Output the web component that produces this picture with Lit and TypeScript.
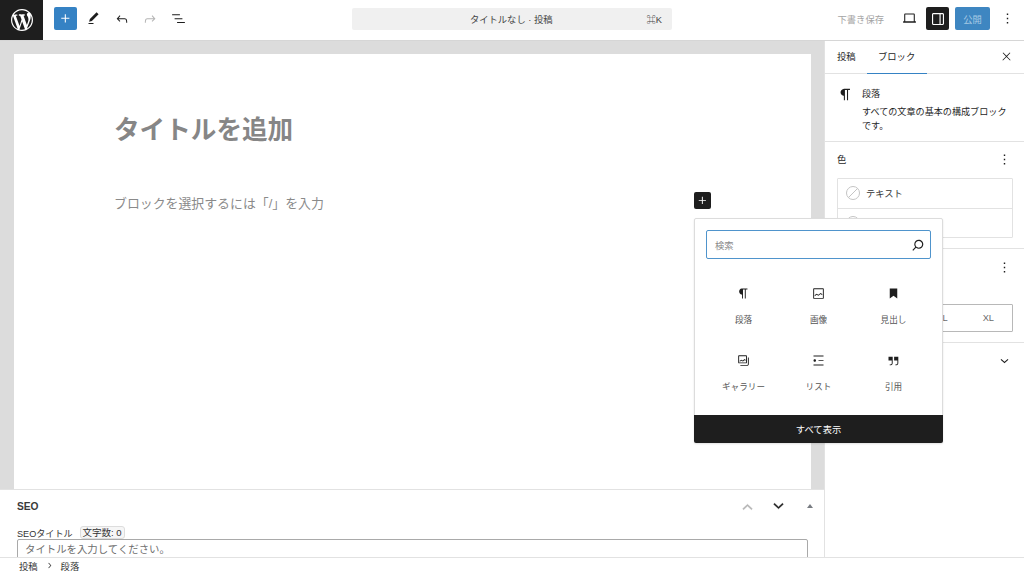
import { LitElement, html, css, svg } from "lit";
import { customElement } from "lit/decorators.js";

const P = {
  plus: "M11 12.5V17.5H12.5V12.5H17.5V11H12.5V6H11V11H6V12.5H11Z",
  undo: "M18.3 11.7c-.6-.6-1.4-.9-2.3-.9H6.7l2.9-3.3-1.1-1-4.5 5L8.5 16l1-1-2.7-2.7H16c.5 0 .9.2 1.3.5 1 1 1 3.4 1 4.5v.3h1.5v-.2c0-1.5 0-4.3-1.5-5.7z",
  redo: "M15.6 6.5l-1.1 1 2.9 3.3H8c-.9 0-1.7.3-2.3.9-1.4 1.5-1.4 4.2-1.4 5.6v.2h1.5v-.3c0-1.1 0-3.5 1-4.5.3-.3.7-.5 1.3-.5h9.2L14.5 15l1.1 1.1 4.6-4.6-4.6-5z",
  list: "M3 6h11v1.5H3V6Zm3.5 5.5h11V13h-11v-1.5ZM21 17H10v1.5h11V17Z",
  pencil: "M20.1 5.1 16.9 2 6.2 12.7l-1.3 4.4 4.5-1.3L20.1 5.1zM4 20.8h8v-1.5H4v1.5z",
  para: "M18.3 4H9.9v-.1l-.9.2c-2.3.4-4 2.4-4 4.8s1.7 4.4 4 4.8l.7.1V20h1.5V5.5h2.9V20h1.5V5.5h2.7V4z",
  heading: "M6 4h12v16l-6-4.5L6 20z",
  image: "M5 3.500h14c.8 0 1.500.7 1.500 1.500v14c0 .8-.7 1.500-1.500 1.500H5c-.8 0-1.500-.7-1.500-1.500V5c0-.8.7-1.500 1.500-1.500zM5 5v14h14V5H5zm.6 9.800 3.200-2.600 3 1.800 3.600-3 3 2.200-.9 1.100-2.100-1.500-3.500 2.900-3-1.800-2.400 2z",
  gallery: "M5 3.5h11c.8 0 1.5.7 1.5 1.5v10c0 .8-.7 1.5-1.5 1.5H5c-.8 0-1.5-.7-1.5-1.5V5c0-.8.7-1.500 1.5-1.500zM5 5v10h11V5H5zm.5 7.6 3-2 2.4 1.2 2.8-2.1 2 1.4-.9 1.2-1.1-.8-2.6 2-2.5-1.2-2.1 1.4zM19 7h1.5v11c0 1.4-1.1 2.5-2.5 2.5H7V19h11c.6 0 1-.4 1-1V7z",
  listBlock: "M4 4v1.5h16V4H4zm8 8.5h8V11h-8v1.5zM4 20h16v-1.5H4V20zm4-8c0-1.1-.9-2-2-2s-2 .9-2 2 .9 2 2 2 2-.9 2-2z",
  quote: "M13 6v6h5.2v4c0 .8-.2 1.4-.5 1.7-.6.6-1.6.6-2.5.5h-.3v1.5h.5c1 0 2.3-.1 3.3-1 .6-.6 1-1.6 1-2.8V6H13zm-9 6h5.2v4c0 .8-.2 1.4-.5 1.7-.6.6-1.6.6-2.5.5h-.3v1.5h.5c1 0 2.3-.1 3.3-1 .6-.6 1-1.6 1-2.8V6H4v6z",
  search: "M13 5c-3.3 0-6 2.7-6 6 0 1.4.5 2.7 1.3 3.7l-3.8 3.8 1.1 1.1 3.8-3.8c1 .8 2.3 1.3 3.7 1.3 3.3 0 6-2.7 6-6S16.3 5 13 5zm0 10.5c-2.5 0-4.5-2-4.5-4.5s2-4.5 4.5-4.5 4.5 2 4.5 4.5-2 4.5-4.5 4.5z",
  close: "M13 11.8l6.1-6.3-1-1-6.1 6.2-6.1-6.2-1 1 6.1 6.3-6.5 6.7 1 1 6.5-6.6 6.5 6.6 1-1z",
  more: "M13 19h-2v-2h2v2zm0-6h-2v-2h2v2zm0-6h-2V5h2v2z",
  laptop: "M6 5h12c.8 0 1.5.7 1.5 1.5V16H21v2H3v-2h1.5V6.500C4.500 5.700 5.200 5 6 5zm0 1.500V16h12V6.500H6z",
  sidebar: "M18 4H6c-1.100 0-2 .9-2 2v12c0 1.100.9 2 2 2h12c1.100 0 2-.9 2-2V6c0-1.100-.9-2-2-2zM5.500 18V6c0-.3.2-.5.5-.5h8v13H6c-.3 0-.5-.2-.5-.5zm13 0c0 .3-.2.5-.5.5h-2.500v-13H18c.3 0 .5.2.5.5v12z",
  chevDown: "M17.500 9.500 12 14.500l-5.500-5 1-1.100L12 12.500l4.500-4.100z",
  chevUp: "M6.500 14.500 12 9.500l5.500 5-1 1.100L12 11.500l-4.500 4.100z",
  chevRight: "M10.600 6 9.400 7l4.600 5-4.600 5 1.200 1 5.400-6z",
  wp: "M20 10c0-5.51-4.49-10-10-10C4.480 0 0 4.490 0 10c0 5.520 4.480 10 10 10 5.510 0 10-4.480 10-10zM7.780 15.370 4.370 6.220c.55-.02 1.170-.08 1.170-.08.5-.06.44-1.130-.06-1.110 0 0-1.450.11-2.370.11-.18 0-.37 0-.58-.01C4.120 2.690 6.870 1.110 10 1.110c2.330 0 4.450.87 6.050 2.340-.68-.11-1.650.39-1.650 1.580 0 .74.45 1.360.9 2.100.35.61.55 1.360.55 2.460 0 1.490-1.400 5-1.400 5l-3.030-8.370c.54-.02.82-.17.82-.17.5-.05.44-1.250-.06-1.220 0 0-1.440.12-2.380.12-.87 0-2.330-.12-2.330-.12-.5-.03-.56 1.200-.06 1.220l.92.08 1.260 3.410zM17.410 10c.24-.64.74-1.870.43-4.250.7 1.290 1.050 2.710 1.050 4.250 0 3.290-1.730 6.240-4.400 7.780.97-2.590 1.940-5.200 2.920-7.780zM6.100 18.090C3.120 16.650 1.110 13.530 1.110 10c0-1.300.23-2.480.72-3.590C3.250 10.300 4.670 14.200 6.100 18.090zm4.030-6.630 2.580 6.980c-.86.29-1.760.45-2.710.45-.79 0-1.570-.11-2.290-.33.81-2.380 1.620-4.740 2.420-7.100z",
};

const icon = (d: string, size = 17, vb = 24) =>
  html`<svg width=${size} height=${size} viewBox="0 0 ${vb} ${vb}" fill="currentColor">${svg`<path d=${d}></path>`}</svg>`;

const blocks: [string, string][] = [
  [P.para, "段落"],
  [P.image, "画像"],
  [P.heading, "見出し"],
  [P.gallery, "ギャラリー"],
  [P.listBlock, "リスト"],
  [P.quote, "引用"],
];

@customElement("app-root")
export class AppRoot extends LitElement {
  static styles = css`
    :host {
      display: flex;
      flex-direction: column;
      position: relative;
      width: 1024px;
      height: 575px;
      overflow: hidden;
      background: #fff;
      color: #1e1e1e;
      font-family: "Liberation Sans", "Noto Sans CJK JP", sans-serif;
      font-size: 9.3px;
    }
    svg { display: block; flex: none; }
    .top {
      flex: none;
      height: 37px;
      padding-bottom: 3px;
      display: flex;
      align-items: center;
      border-bottom: 1px solid #d6d6d6;
      box-sizing: content-box;
    }
    .logo {
      width: 43px;
      height: 40px;
      align-self: flex-start;
      background: #1e1e1e;
      color: #fff;
      display: flex;
      align-items: center;
      justify-content: center;
    }
    .tools { display: flex; align-items: center; width: 309px; padding-left: 11px; box-sizing: border-box; }
    .ib { width: 28.500px; display: flex; justify-content: center; }
    .add {
      width: 23px; height: 23px; border-radius: 2px; background: #3582c4; color: #fff;
      display: flex; align-items: center; justify-content: center; margin-right: 2px;
    }
    .muted { color: #b4b4b4; }
    .cmd {
      width: 320px; height: 22px; background: #f0f0f0; border-radius: 2px;
      display: grid; grid-template-columns: 1fr auto; align-items: center;
      padding: 0 10px; box-sizing: border-box; position: relative; color: #444; font-size: 9.300px;
    }
    .cmd .t { text-align: center; padding-left: 14px; }
    .cmd .k { font-size: 9.300px; }
    .right { display: flex; align-items: center; margin-left: auto; padding-right: 8px; }
    .save { color: #a4a4a4; margin-right: 14px; }
    .view { width: 23px; display: flex; justify-content: center; margin-right: 5px; }
    .toggle {
      width: 23px; height: 23px; border-radius: 2px; background: #1e1e1e; color: #fff;
      display: flex; align-items: center; justify-content: center; margin-right: 6px;
    }
    .pub {
      width: 35px; height: 23px; border-radius: 2px; background: #3e86c1; color: #a9cbe5;
      display: flex; align-items: center; justify-content: center; margin-right: 9px;
    }
    .body { flex: 1; min-height: 0; display: flex; }
    .main { flex: 1; min-width: 0; display: flex; flex-direction: column; }
    .canvas {
      flex: 1; min-height: 0; background: #dcdcdc; padding: 13px 13px 0 14px;
      display: flex;
    }
    .sheet { flex: 1; background: #fff; padding: 57px 100px 0; }
    .title { font-size: 25.600px; font-weight: 700; color: #868686; line-height: 38px; margin: 0; }
    .ph { font-size: 12.900px; color: #8a8a8a; line-height: 20px; margin-top: 45px; }
    .seo {
      flex: none; height: 68px; border-top: 1px solid #e2e2e2; box-sizing: border-box;
      padding: 0 16px 0 17px; overflow: hidden;
    }
    .seo-h { height: 32px; display: flex; align-items: center; color: #3a3a3a; }
    .seo-h b { font-size: 10.200px; font-weight: 700; }
    .seo-h .ctr { margin-left: auto; margin-right: -5px; display: flex; align-items: center; gap: 10px; }
    .seo-h .ctr svg { stroke: currentColor; stroke-width: .5px; }
    .seo-h .dn { color: #1e1e1e; }
    .tri { width: 0; height: 0; border: 3px solid transparent; border-top: 0; border-bottom: 4px solid #787c82; margin-left: 8px; }
    .seo-l { display: flex; align-items: center; height: 15px; margin-top: 3px; gap: 7px; font-size: 9.100px; color: #333; }
    .badge { border: 1px solid #ddd; border-radius: 3px; padding: 0 2px; background: #f6f6f6; line-height: 11px; font-size: 9.500px; }
    .seo-i {
      height: 30px; margin-top: -1px; box-sizing: border-box; border: 1px solid #a9a9a9; border-radius: 2px;
      padding: 1px 7px; font-size: 10.400px; color: #6e6e6e;
    }
    .side { flex: none; width: 199px; border-left: 1px solid #e2e2e2; box-sizing: content-box; }
    .tabs {
      height: 32px; display: flex; align-items: stretch; border-bottom: 1px solid #e2e2e2;
      padding: 0 11px 0 0; color: #1e1e1e;
    }
    .tab { display: flex; align-items: center; justify-content: center; padding: 0 11px 2px 12px; }
    .tab.on { width: 60px; padding: 0 0 2px; box-sizing: border-box; border-bottom: 1px solid #3582c4; margin-bottom: -1px; }
    .tabs .x { margin-left: auto; display: flex; align-items: center; padding-bottom: 2px; }
    .card { height: 68px; box-sizing: border-box; border-bottom: 1px solid #e2e2e2; padding: 12px 11px 0 12px; display: flex; gap: 8px; }
    .card .txt { line-height: 14.500px; padding-top: 1px; font-size: 9.100px; }
    .card .nm { margin-bottom: 3px; }
    .panel { border-bottom: 1px solid #e2e2e2; padding: 0 11px 0 12px; box-sizing: border-box; }
    .ph-row { display: flex; align-items: center; justify-content: space-between; }
    .p-color { height: 107px; padding-top: 9px; }
    .p-color .ph-row span { position: relative; top: -1px; }
    .p-type { height: 94px; padding-top: 10px; }
    .p-adv { border: 0; padding-top: 10px; }
    .colors { border: 1px solid #e2e2e2; border-radius: 1px; margin-top: 10px; }
    .colors .row { height: 29px; box-sizing: border-box; display: flex; align-items: center; gap: 6px; padding: 0 0 1px 8px; color: #333; }
    .colors .row + .row { border-top: 1px solid #e2e2e2; }
    .dot { width: 14px; height: 14px; }
    .sizes {
      margin-top: 28px; height: 28px; box-sizing: border-box; border: 1px solid #b8b8b8; border-radius: 1px;
      display: flex; align-items: center; justify-content: flex-end; gap: 35px; padding-right: 18px; color: #6b6b6b;
    }
    .foot {
      flex: none; height: 18px; border-top: 1px solid #e2e2e2; box-sizing: border-box;
      display: flex; align-items: center; padding: 0 0 2px 19px; gap: 6px; color: #333;
    }
    .inserter {
      position: absolute; left: 694px; top: 192px; width: 17px; height: 17px; background: #1e1e1e;
      color: #fff; border-radius: 2px; display: flex; align-items: center; justify-content: center;
    }
    .pop {
      position: absolute; left: 694px; top: 218px; width: 249px; height: 225px;
      background: #fff; border: 1px solid #dcdcdc; box-sizing: border-box; border-radius: 2px;
      display: flex; flex-direction: column; box-shadow: 0 1px 2px rgba(0,0,0,.12);
    }
    .s {
      margin: 11px 11px 0; height: 29px; flex: none; box-sizing: border-box; border: 1px solid #4f94cc;
      border-radius: 2px; display: flex; align-items: center; justify-content: space-between;
      padding: 0 3px 0 8px; color: #8a8a8a;
    }
    .s svg { color: #1e1e1e; }
    .grid { flex: 1; display: grid; grid-template-columns: repeat(3, 75px); grid-auto-rows: 67px; padding: 21px 11px 0; align-content: start; }
    .b { display: flex; flex-direction: column; align-items: center; padding-top: 6px; gap: 13px; color: #555; font-size: 8.600px; box-sizing: border-box; }
    .b svg { color: #1e1e1e; }
    .b span { line-height: 13px; }
    .all {
      flex: none; height: 28px; background: #1e1e1e; color: #fff; margin: 0 -1px -1px;
      display: flex; align-items: center; justify-content: center; border-radius: 0 0 2px 2px;
    }
  `;

  render() {
    const dot = html`<svg class="dot" viewBox="0 0 14 14" fill="none" stroke="#c4c4c4"><circle cx="7" cy="7" r="6.500"></circle><path d="M2.500 11.500 11.500 2.500"></path></svg>`;
    return html`
      <div class="top">
        <div class="logo">${icon(P.wp, 22, 20)}</div>
        <div class="tools">
          <div class="add">${icon(P.plus, 17)}</div>
          <div class="ib">${icon(P.pencil, 15)}</div>
          <div class="ib">${icon(P.undo, 16)}</div>
          <div class="ib muted">${icon(P.redo, 16)}</div>
          <div class="ib">${icon(P.list, 17)}</div>
        </div>
        <div class="cmd"><span class="t">タイトルなし · 投稿</span><span class="k">⌘K</span></div>
        <div class="right">
          <span class="save">下書き保存</span>
          <div class="view">${icon(P.laptop, 17)}</div>
          <div class="toggle">${icon(P.sidebar, 18)}</div>
          <div class="pub">公開</div>
          ${icon(P.more, 17)}
        </div>
      </div>
      <div class="body">
        <div class="main">
          <div class="canvas">
            <div class="sheet">
              <h1 class="title">タイトルを追加</h1>
              <div class="ph">ブロックを選択するには「/」を入力</div>
            </div>
          </div>
          <div class="seo">
            <div class="seo-h">
              <b>SEO</b>
              <div class="ctr">
                <span class="muted">${icon(P.chevUp, 21)}</span>
                <span class="dn">${icon(P.chevDown, 21)}</span>
                <span class="tri"></span>
              </div>
            </div>
            <div class="seo-l"><span>SEOタイトル</span><span class="badge">文字数: 0</span></div>
            <div class="seo-i">タイトルを入力してください。</div>
          </div>
        </div>
        <aside class="side">
          <div class="tabs">
            <div class="tab">投稿</div>
            <div class="tab on">ブロック</div>
            <div class="x">${icon(P.close, 13)}</div>
          </div>
          <div class="card">
            <div>${icon(P.para, 17)}</div>
            <div class="txt">
              <div class="nm">段落</div>
              <div>すべての文章の基本の構成ブロックです。</div>
            </div>
          </div>
          <div class="panel p-color">
            <div class="ph-row"><span>色</span>${icon(P.more, 17)}</div>
            <div class="colors">
              <div class="row">${dot}<span>テキスト</span></div>
              <div class="row">${dot}</div>
            </div>
          </div>
          <div class="panel p-type">
            <div class="ph-row"><span>タイポグラフィ</span>${icon(P.more, 17)}</div>
            <div class="sizes"><span>L</span><span>XL</span></div>
          </div>
          <div class="panel p-adv">
            <div class="ph-row"><span>高度な設定</span>${icon(P.chevDown, 17)}</div>
          </div>
        </aside>
      </div>
      <div class="foot"><span>投稿</span>${icon(P.chevRight, 11)}<span>段落</span></div>
      <div class="inserter">${icon(P.plus, 15)}</div>
      <div class="pop">
        <div class="s"><span>検索</span>${icon(P.search, 18)}</div>
        <div class="grid">
          ${blocks.map(([d, l]) => html`<div class="b">${icon(d, 15)}<span>${l}</span></div>`)}
        </div>
        <div class="all">すべて表示</div>
      </div>
    `;
  }
}
